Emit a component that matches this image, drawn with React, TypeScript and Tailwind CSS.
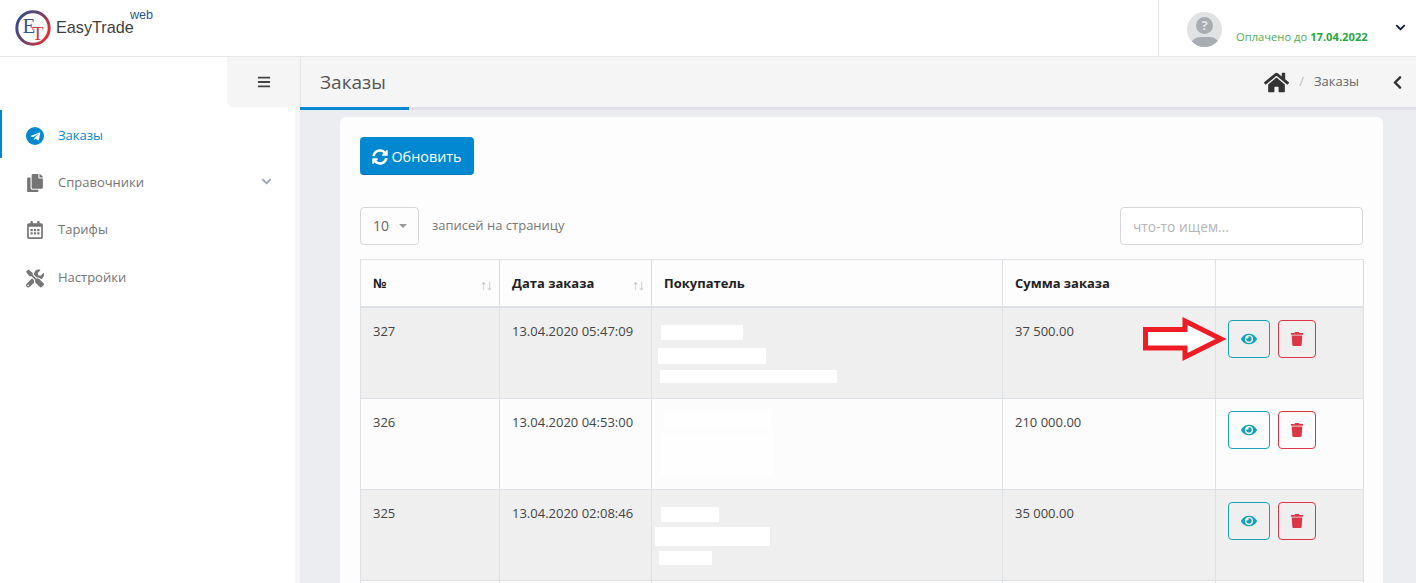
import { FaBars, FaChevronDown, FaChevronLeft, FaCopy, FaEye, FaHome, FaRegCalendarAlt, FaSyncAlt, FaTelegramPlane, FaTools, FaTrash } from "react-icons/fa";

type Bar = { className: string };

const rows: { id: number; date: string; sum: string; bars: Bar[]; odd: boolean; height: string }[] = [
  {
    id: 327,
    date: "13.04.2020 05:47:09",
    sum: "37 500.00",
    odd: true,
    height: "h-[92px]",
    bars: [
      { className: "mt-[17px] ml-[9px] h-[15px] w-[82px]" },
      { className: "mt-2 ml-[6px] h-4 w-[108px]" },
      { className: "mt-[6px] ml-2 h-[13px] w-[177px]" },
    ],
  },
  {
    id: 326,
    date: "13.04.2020 04:53:00",
    sum: "210 000.00",
    odd: false,
    height: "h-[91px]",
    bars: [
      { className: "mt-[14px] ml-3 h-[14px] w-[106px]" },
      { className: "mt-[6px] ml-[9px] h-[42px] w-[112px]" },
    ],
  },
  {
    id: 325,
    date: "13.04.2020 02:08:46",
    sum: "35 000.00",
    odd: true,
    height: "h-[91px]",
    bars: [
      { className: "mt-[17px] ml-[9px] h-[15px] w-[58px]" },
      { className: "mt-[5px] ml-[3px] h-[19px] w-[115px]" },
      { className: "mt-[5px] ml-[7px] h-[14px] w-[53px]" },
    ],
  },
];

function Logo() {
  return (
    <svg width="36" height="36" viewBox="0 0 36 36" className="shrink-0">
      <defs>
        <linearGradient id="ring" x1="0" y1="0" x2="1" y2="0.6">
          <stop offset="0" stopColor="#2f4f8f" />
          <stop offset="0.55" stopColor="#6b3f6e" />
          <stop offset="1" stopColor="#d2343c" />
        </linearGradient>
      </defs>
      <circle cx="18" cy="18" r="16.2" fill="none" stroke="url(#ring)" strokeWidth="3" />
      <text x="7.5" y="23" fontFamily="'Liberation Serif', serif" fontSize="21" fill="#2f5597">E</text>
      <text x="17" y="29.5" fontFamily="'Liberation Serif', serif" fontSize="19" fill="#d2343c">T</text>
    </svg>
  );
}

function Header() {
  return (
    <header className="flex h-[57px] shrink-0 border-b border-[#e6e6e6] bg-white">
      <div className="flex flex-1 pl-[15px] pt-[10px]">
        <Logo />
        <div className="relative ml-[5px] mt-[8px] font-['Liberation_Sans',sans-serif] text-[16.2px] leading-[19px] text-[#3d3d3d]">
          EasyTrade
          <span className="absolute left-[74px] top-[-11px] text-[12.6px] leading-[16px] text-[#2f5597]">web</span>
        </div>
      </div>
      <div className="flex w-[258px] border-l border-[#e6e6e6] pl-[28px] pt-3">
        <div className="size-[35px] overflow-hidden rounded-full bg-[#e1e2e4]">
          <div className="relative flex h-full w-full flex-col items-center">
            <span className="mt-[5px] flex size-[17px] items-center justify-center rounded-full bg-[#a9acb0] text-[13px] font-bold leading-none text-[#e1e2e4]">?</span>
            <span className="absolute bottom-0 h-[10px] w-[30px] rounded-t-[15px] bg-[#a9acb0]" />
          </div>
        </div>
        <div className="ml-[14px] mt-[18px] text-[11.2px] leading-[14px] text-[#4caf50]">
          Оплачено до <b className="text-[#28a745]">17.04.2022</b>
        </div>
        <FaChevronDown className="ml-[27px] mt-[10px] size-[11px] text-[#0b1c33]" />
      </div>
    </header>
  );
}

function NavItem({ icon, label, active, caret, height = "h-12" }: { icon: React.ReactNode; label: string; active?: boolean; caret?: boolean; height?: string }) {
  return (
    <div
      className={`flex ${height} items-center border-l-2 pl-[24px] pt-1 text-[13px] ${
        active ? "border-[#0288d1] text-[#0288d1]" : "border-transparent text-[#757575]"
      }`}
    >
      <span className="flex w-[18px] justify-center">{icon}</span>
      <span className="ml-[14px]">{label}</span>
      {caret && <FaChevronDown className="mb-[3px] ml-[117px] size-[11px] text-[#9aa5b1]" />}
    </div>
  );
}

function Sidebar() {
  return (
    <aside className="flex w-[300px] shrink-0 flex-col border-r-[5px] border-[#f5f5f5] bg-white">
      <div className="flex h-[50px] justify-end">
        <div className="-mr-[5px] flex w-[73px] items-center justify-center rounded-bl-md bg-[#f5f5f5] text-[#444]">
          <FaBars className="size-[14px]" />
        </div>
      </div>
      <nav className="mt-[3px]">
        <NavItem
          active
          label="Заказы"
          icon={
            <span className="flex size-[18px] items-center justify-center rounded-full bg-[#0288d1] text-white">
              <FaTelegramPlane className="size-[11px]" />
            </span>
          }
        />
        <NavItem caret height="h-[46px]" label="Справочники" icon={<FaCopy className="size-[18px]" />} />
        <NavItem label="Тарифы" icon={<FaRegCalendarAlt className="size-[18px]" />} />
        <NavItem label="Настройки" icon={<FaTools className="size-[19px]" />} />
      </nav>
    </aside>
  );
}

function Arrow() {
  return (
    <svg width="88" height="46" viewBox="0 0 88 46" className="absolute left-[-86px] top-[-3px]">
      <polygon points="3.5,12.5 43,12.5 43,4 79,22 43,40 43,31 3.5,31" fill="#fff" stroke="#ee1c25" strokeWidth="5" />
    </svg>
  );
}

function OrdersTable() {
  const cell = "border-r border-[#dee2e6] px-3 pt-[14px] align-top";
  return (
    <table className="w-[1003px] table-fixed border-collapse border border-[#dee2e6] text-[13px] text-[#444]">
      <colgroup>
        <col className="w-[139px]" />
        <col className="w-[152px]" />
        <col className="w-[351px]" />
        <col className="w-[213px]" />
        <col className="w-[148px]" />
      </colgroup>
      <thead>
        <tr className="h-[47px] border-b-2 border-[#dee2e6] text-left text-[#222]">
          {["№", "Дата заказа", "Покупатель", "Сумма заказа", ""].map((title, i) => (
            <th key={i} className="relative border-r border-[#dee2e6] px-3 pt-[2px] font-bold">
              {title}
              {i < 2 && <span className="absolute right-[7px] top-[14px] text-[14px] font-normal tracking-[-1px] text-[#bbbfc3]">↑↓</span>}
            </th>
          ))}
        </tr>
      </thead>
      <tbody>
        {rows.map((row) => (
          <tr key={row.id} className={`${row.height} border-b border-[#dee2e6] ${row.odd ? "bg-[#efefef]" : "bg-[#fcfcfc]"}`}>
            <td className={cell}>{row.id}</td>
            <td className={cell}>{row.date}</td>
            <td className="border-r border-[#dee2e6] align-top">
              <div className="flex flex-col">
                {row.bars.map((bar, i) => (
                  <div key={i} className={`${bar.className} ${row.odd ? "bg-white" : "bg-[#fefefe]"}`} />
                ))}
              </div>
            </td>
            <td className={cell}>{row.sum}</td>
            <td className="px-3 pt-3 align-top">
              <div className="relative flex gap-[8px]">
                {row.id === 327 && <Arrow />}
                <button className="flex h-[38px] w-[42px] items-center justify-center rounded border border-[#17a2b8] text-[#17a2b8]">
                  <FaEye className="size-4" />
                </button>
                <button className="flex h-[38px] w-[38px] items-center justify-center rounded border border-[#dc3545] text-[#dc3545]">
                  <FaTrash className="size-[14px]" />
                </button>
              </div>
            </td>
          </tr>
        ))}
        {/* next row starts at the fold */}
        <tr className="h-[91px] border-b border-[#dee2e6] bg-[#fcfcfc]">
          <td className="border-r border-[#dee2e6]" />
          <td className="border-r border-[#dee2e6]" />
          <td className="border-r border-[#dee2e6]" />
          <td className="border-r border-[#dee2e6]" />
          <td />
        </tr>
      </tbody>
    </table>
  );
}

export default function App() {
  return (
    <div className="flex h-screen flex-col overflow-hidden bg-white font-['Open_Sans',sans-serif]">
      <Header />
      <div className="flex min-h-0 flex-1">
        <Sidebar />
        <main className="min-w-0 flex-1 bg-[#ebedf1]">
          <div className="relative flex h-[50px] items-center border-l border-[#e4e4e4] bg-[#f5f5f5] pl-[19px] pr-[11px]">
            <h1 className="text-[19px] text-[#555]">Заказы</h1>
            <span className="absolute bottom-[-3px] left-[-1px] h-[3px] w-[109px] bg-[#0288d1]" />
            <div className="ml-auto flex items-center text-[13px] text-[#666]">
              <FaHome className="size-[25px] text-[#333]" />
              <span className="ml-[10px] text-[#bbb]">/</span>
              <span className="ml-[10px]">Заказы</span>
              <FaChevronLeft className="ml-[31px] size-[15px] text-[#333]" />
            </div>
          </div>
          <div className="h-[3px] bg-[#e0e0e6]" />
          <section className="ml-10 mr-[33px] mt-[7px] rounded-md bg-[#fdfdfd] p-5">
            <button className="flex h-[38px] w-[114px] items-center justify-center gap-[3px] rounded border-b border-[#0277b8] bg-[#0288d1] pt-[2px] text-[14.4px] text-white">
              <FaSyncAlt className="size-4" />
              Обновить
            </button>
            <div className="mt-[32px] flex h-[38px] items-center">
              <div className="flex h-[38px] w-[59px] items-center rounded border border-[#d5d7da] pl-[12px] text-sm text-[#666]">
                10
                <span className="ml-[10px] size-0 border-x-[4px] border-t-[4px] border-x-transparent border-t-[#999]" />
              </div>
              <span className="ml-[13px] text-[13px] text-[#777]">записей на страницу</span>
              <input
                readOnly
                placeholder="что-то ищем..."
                className="ml-auto h-[38px] w-[243px] rounded border border-[#d5d7da] bg-white px-3 text-[13.8px] placeholder:text-[#b5b5b5]"
              />
            </div>
            <div className="mt-[14px]">
              <OrdersTable />
            </div>
          </section>
        </main>
      </div>
    </div>
  );
}
